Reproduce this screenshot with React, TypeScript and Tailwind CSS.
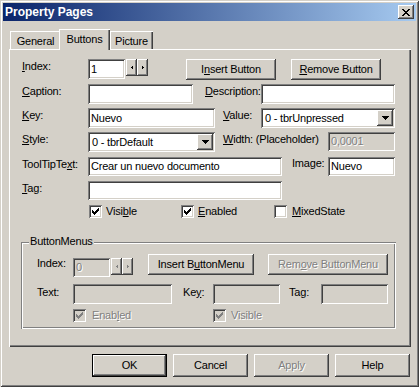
import React from 'react';

const RAISED = 'shadow-[inset_-1px_-1px_#404040,inset_1px_1px_#fff,inset_-2px_-2px_#808080]';
const SUNKEN = 'shadow-[inset_1px_1px_#808080,inset_-1px_-1px_#fff,inset_2px_2px_#404040,inset_-2px_-2px_#d4d0c8]';
const GRAY_TEXT = 'text-[#808080] [text-shadow:1px_1px_0_#fff]';

type Kids = { children?: React.ReactNode; className?: string };

// text with one underlined accelerator letter
const Acc = ({ t, i }: { t: string; i?: number }) =>
  i === undefined ? <>{t}</> : <>{t.slice(0, i)}<u>{t[i]}</u>{t.slice(i + 1)}</>;

const Label = ({ children, className = '' }: Kids) => (
  <span className={`shrink-0 whitespace-nowrap ${className}`}>{children}</span>
);

const Button = ({ children, className = '', disabled, isDefault }: Kids & { disabled?: boolean; isDefault?: boolean }) => (
  <div className={`shrink-0 bg-[#d4d0c8] ${isDefault ? 'border border-black' : ''} ${className}`}>
    <div className={`w-full h-full flex items-center justify-center whitespace-nowrap ${RAISED} ${disabled ? GRAY_TEXT : ''}`}>
      {children}
    </div>
  </div>
);

const Spin = ({ dir, disabled, className = '' }: { dir: 'left' | 'right'; disabled?: boolean; className?: string }) => (
  <div className={`shrink-0 w-[11px] h-[17px] bg-[#d4d0c8] flex items-center justify-center ${RAISED} ${className}`}>
    <svg width="2" height="3" shapeRendering="crispEdges" className={disabled ? 'fill-[#808080]' : 'fill-black'}>
      {dir === 'left' ? (
        <>
          <rect x="1" y="0" width="1" height="3" />
          <rect x="0" y="1" width="1" height="1" />
        </>
      ) : (
        <>
          <rect x="0" y="0" width="1" height="3" />
          <rect x="1" y="1" width="1" height="1" />
        </>
      )}
    </svg>
  </div>
);

const Box = ({ children, className = '', disabled }: Kids & { disabled?: boolean }) => (
  <div
    className={`shrink-0 flex items-center pl-[3px] whitespace-nowrap overflow-hidden ${SUNKEN} ${
      disabled ? 'bg-[#d4d0c8] ' + GRAY_TEXT : 'bg-white'
    } ${className}`}
  >
    {children}
  </div>
);

const Combo = ({ value, className = '' }: { value: string; className?: string }) => (
  <div className={`shrink-0 h-[20px] flex items-center pl-[4px] pr-[2px] bg-white ${SUNKEN} ${className}`}>
    <span className="flex-1 whitespace-nowrap">{value}</span>
    <div className={`w-[16px] h-[16px] bg-[#d4d0c8] flex items-center justify-center ${RAISED}`}>
      <svg width="7" height="4" shapeRendering="crispEdges" className="fill-black">
        <rect x="0" y="0" width="7" height="1" />
        <rect x="1" y="1" width="5" height="1" />
        <rect x="2" y="2" width="3" height="1" />
        <rect x="3" y="3" width="1" height="1" />
      </svg>
    </div>
  </div>
);

const Check = ({ checked, disabled }: { checked?: boolean; disabled?: boolean }) => (
  <div className={`shrink-0 w-[13px] h-[13px] ${SUNKEN} ${disabled ? 'bg-[#d4d0c8]' : 'bg-white'}`}>
    {checked && (
      <svg width="13" height="13" shapeRendering="crispEdges" className={disabled ? 'fill-[#808080]' : 'fill-black'}>
        <g transform="translate(3 3)">
          <rect x="6" y="0" width="1" height="1" />
          <rect x="5" y="1" width="2" height="1" />
          <rect x="0" y="2" width="1" height="1" />
          <rect x="4" y="2" width="3" height="1" />
          <rect x="0" y="3" width="2" height="1" />
          <rect x="3" y="3" width="3" height="1" />
          <rect x="0" y="4" width="5" height="1" />
          <rect x="1" y="5" width="3" height="1" />
          <rect x="2" y="6" width="1" height="1" />
        </g>
      </svg>
    )}
  </div>
);

const TAB = 'shrink-0 flex justify-center pt-[4px] bg-[#d4d0c8] shadow-[inset_1px_1px_#fff,inset_-1px_0_#404040,inset_-2px_0_#808080]';

export default function App() {
  return (
    <div className="w-[419px] h-[387px] p-[3px] flex flex-col bg-[#d4d0c8] text-black text-[11px] leading-[13px] tracking-[-0.2px] font-['Liberation_Sans',Arial,sans-serif] shadow-[inset_1px_1px_#d4d0c8,inset_-1px_-1px_#404040,inset_2px_2px_#fff,inset_-2px_-2px_#808080]">
      {/* title bar */}
      <div className="h-[18px] shrink-0 flex items-center pl-[2px] pr-[2px] bg-linear-to-r/srgb from-[#0a246a] to-[#a6caf0]">
        <span className="flex-1 text-white font-bold text-[12px] leading-[14px] tracking-normal">Property Pages</span>
        <div className={`w-[16px] h-[14px] bg-[#d4d0c8] flex items-center justify-center ${RAISED}`}>
          <svg width="8" height="7" shapeRendering="crispEdges" className="fill-black">
            <rect x="0" y="0" width="2" height="1" />
            <rect x="6" y="0" width="2" height="1" />
            <rect x="1" y="1" width="2" height="1" />
            <rect x="5" y="1" width="2" height="1" />
            <rect x="2" y="2" width="4" height="1" />
            <rect x="3" y="3" width="2" height="1" />
            <rect x="2" y="4" width="4" height="1" />
            <rect x="1" y="5" width="2" height="1" />
            <rect x="5" y="5" width="2" height="1" />
            <rect x="0" y="6" width="2" height="1" />
            <rect x="6" y="6" width="2" height="1" />
          </svg>
        </div>
      </div>

      {/* tabs */}
      <div className="relative z-10 flex items-end h-[20px] mt-[8px] ml-[7px]">
        <div className={`${TAB} w-[51px] h-[18px]`}>General</div>
        <div className={`${TAB} relative z-10 w-[51px] h-[21px] -ml-[2px] -mb-px pt-[3px]`}>Buttons</div>
        <div className={`${TAB} w-[43px] h-[18px]`}>Picture</div>
      </div>

      {/* tab page */}
      <div className="relative w-[402px] h-[298px] ml-[6px] shrink-0 flex flex-col bg-[#d4d0c8] shadow-[inset_1px_1px_#fff,inset_-1px_-1px_#404040,inset_-2px_-2px_#808080]">
        <div className="flex items-start mt-[10px] ml-[13px]">
          <Label className="w-[66px] mt-px"><Acc t="Index:" i={0} /></Label>
          <Box className="w-[37px] h-[20px]">1</Box>
          <Spin dir="left" className="ml-px" />
          <Spin dir="right" />
          <Button className="w-[90px] h-[21px] ml-[38px]"><Acc t="Insert Button" i={1} /></Button>
          <Button className="w-[90px] h-[21px] ml-[15px]"><Acc t="Remove Button" i={0} /></Button>
        </div>

        <div className="flex items-start mt-[4px] ml-[13px]">
          <Label className="w-[66px] mt-px"><Acc t="Caption:" i={0} /></Label>
          <Box className="w-[105px] h-[20px]" />
          <Label className="w-[56px] ml-[12px] mt-px"><Acc t="Description:" i={0} /></Label>
          <Box className="w-[134px] h-[20px]" />
        </div>

        <div className="flex items-start mt-[4px] ml-[13px]">
          <Label className="w-[66px] mt-px"><Acc t="Key:" i={0} /></Label>
          <Box className="w-[127px] h-[20px]">Nuevo</Box>
          <Label className="w-[38px] ml-[8px] mt-px"><Acc t="Value:" i={0} /></Label>
          <Combo className="w-[134px]" value="0 - tbrUnpressed" />
        </div>

        <div className="flex items-start mt-[4px] ml-[13px]">
          <Label className="w-[66px] mt-px"><Acc t="Style:" i={0} /></Label>
          <Combo className="w-[127px]" value="0 - tbrDefault" />
          <Label className="w-[105px] ml-[8px] mt-px"><Acc t="Width: (Placeholder)" i={0} /></Label>
          <Box className="w-[67px] h-[19px]" disabled>0,0001</Box>
        </div>

        <div className="flex items-start mt-[5px] ml-[13px]">
          <Label className="w-[66px] mt-px"><Acc t="ToolTipText:" i={9} /></Label>
          <Box className="w-[194px] h-[19px]">Crear un nuevo documento</Box>
          <Label className="w-[36px] ml-[10px]">Image:</Label>
          <Box className="w-[67px] h-[19px]">Nuevo</Box>
        </div>

        <div className="flex items-start mt-[5px] ml-[13px]">
          <Label className="w-[66px] mt-px"><Acc t="Tag:" i={0} /></Label>
          <Box className="w-[194px] h-[19px]" />
        </div>

        <div className="flex items-center mt-[5px] ml-[80px]">
          <div className="w-[92px] flex items-center">
            <Check checked />
            <span className="ml-[4px]"><Acc t="Visible" i={4} /></span>
          </div>
          <div className="w-[93px] flex items-center">
            <Check checked />
            <span className="ml-[4px]"><Acc t="Enabled" i={0} /></span>
          </div>
          <div className="flex items-center">
            <Check />
            <span className="ml-[5px]"><Acc t="MixedState" i={0} /></span>
          </div>
        </div>

        {/* ButtonMenus group */}
        <div className="relative w-[375px] h-[87px] mt-[24px] ml-[12px] flex flex-col shadow-[inset_1px_1px_#808080,inset_-1px_-1px_#fff,inset_2px_2px_#fff,inset_-2px_-2px_#808080]">
          <span className="absolute left-[8px] -top-[7px] px-px bg-[#d4d0c8]">ButtonMenus</span>

          <div className="flex items-start mt-[12px] ml-[16px]">
            <Label className="w-[36px] mt-[3px]">Index:</Label>
            <Box className="w-[37px] h-[19px] mt-[4px]" disabled>0</Box>
            <Spin dir="left" disabled className="ml-px mt-[4px]" />
            <Spin dir="right" disabled className="mt-[4px]" />
            <Button className="w-[106px] h-[21px] ml-[15px]"><Acc t="Insert ButtonMenu" i={8} /></Button>
            <Button className="w-[120px] h-[21px] ml-[14px]" disabled><Acc t="Remove ButtonMenu" i={3} /></Button>
          </div>

          <div className="flex items-start mt-[7px] ml-[16px]">
            <Label className="w-[36px] mt-[2px]">Text:</Label>
            <Box className="w-[99px] h-[20px]" disabled />
            <Label className="w-[30px] ml-[11px] mt-[2px]"><Acc t="Key:" i={2} /></Label>
            <Box className="w-[67px] h-[20px]" disabled />
            <Label className="w-[32px] ml-[9px] mt-[2px]">Tag:</Label>
            <Box className="w-[67px] h-[20px]" disabled />
          </div>

          <div className="flex items-center mt-[5px] ml-[52px]">
            <div className="w-[140px] flex items-center">
              <Check checked disabled />
              <span className={`ml-[6px] ${GRAY_TEXT}`}><Acc t="Enabled" i={4} /></span>
            </div>
            <div className="flex items-center">
              <Check checked disabled />
              <span className={`ml-[5px] ${GRAY_TEXT}`}>Visible</span>
            </div>
          </div>
        </div>
      </div>

      {/* dialog buttons */}
      <div className="flex justify-end gap-[6px] mt-[7px] mr-[6px]">
        <Button className="w-[75px] h-[23px]" isDefault>OK</Button>
        <Button className="w-[75px] h-[23px]">Cancel</Button>
        <Button className="w-[75px] h-[23px]" disabled>Apply</Button>
        <Button className="w-[75px] h-[23px]">Help</Button>
      </div>
    </div>
  );
}
